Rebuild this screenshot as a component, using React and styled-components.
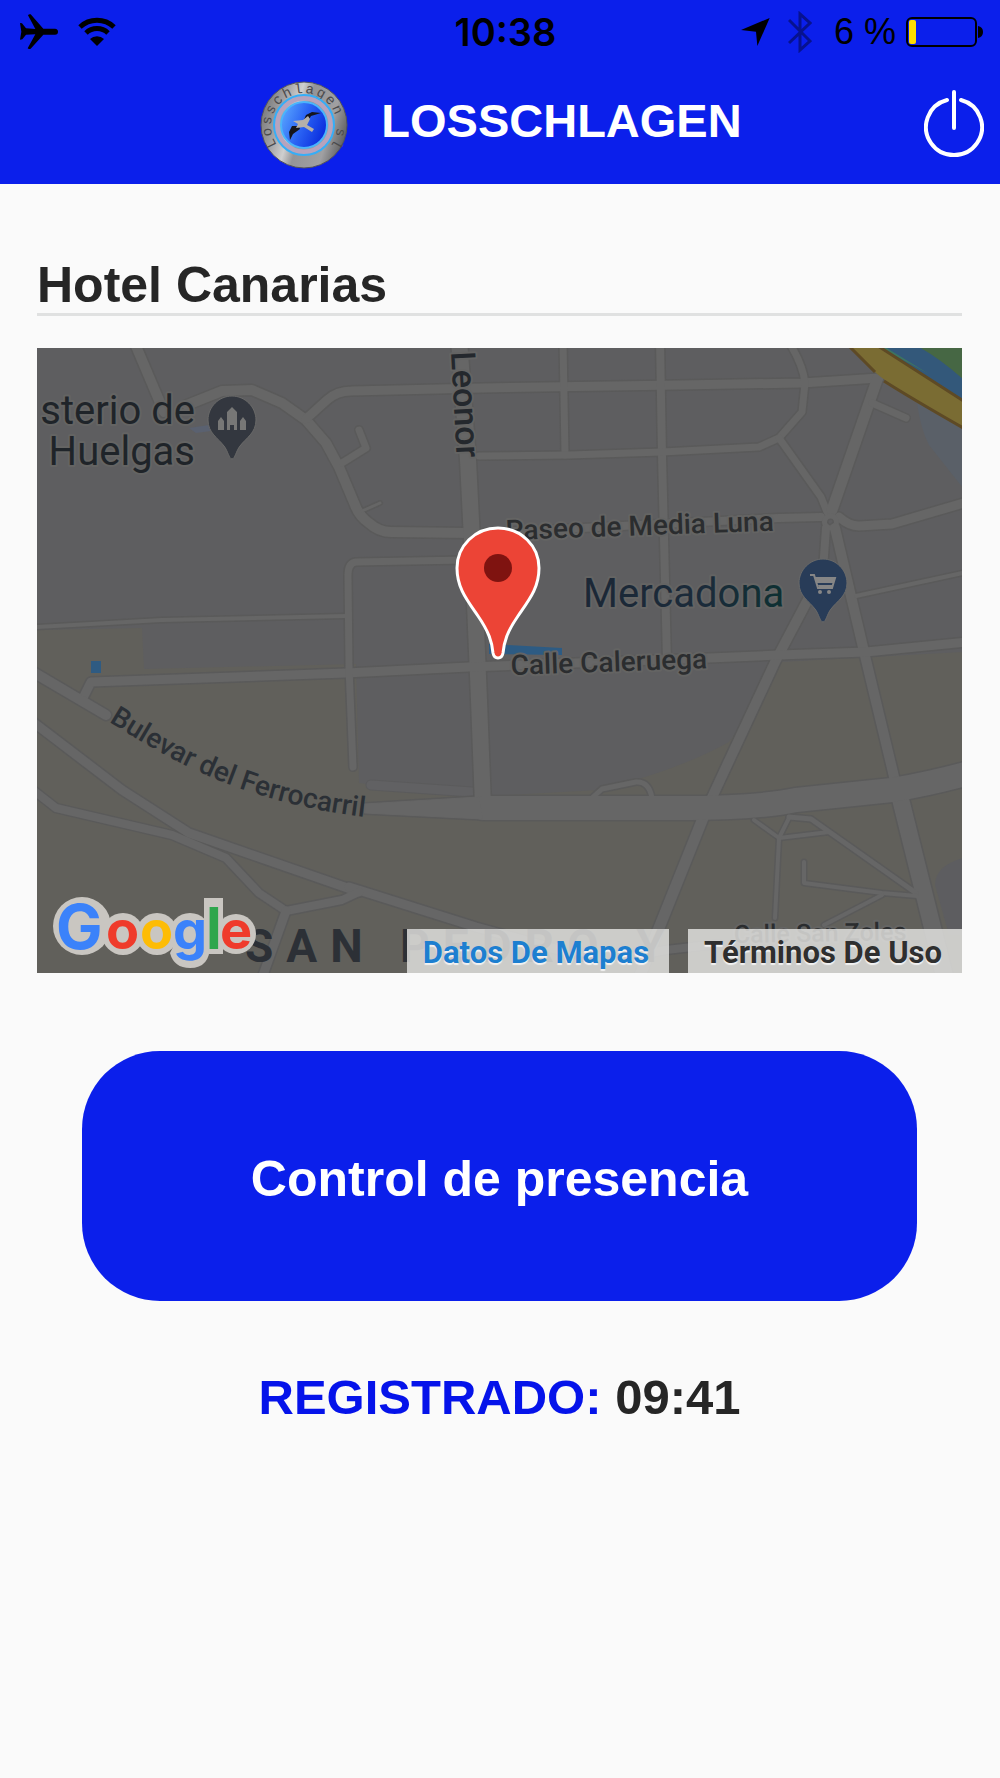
import React from "react";
import styled, { createGlobalStyle } from "styled-components";

const blue = "#0b1feb";
const ink = "#262626";

const GlobalStyle = createGlobalStyle`
  * { box-sizing: border-box; }
  body {
    margin: 0;
    background: #fafafa;
    color: ${ink};
    font-family: "Liberation Sans", Arial, sans-serif;
  }
`;

const Header = styled.header`
  background: ${blue};
`;

const StatusBar = styled.div`
  display: grid;
  grid-template-columns: 1fr auto 1fr;
  align-items: center;
  height: 64px;
  padding: 0 17px 0 20px;
  color: #000;
  font-family: Inter, sans-serif;
  font-size: 36px;
  line-height: 40px;
`;

const StatusGroup = styled.div`
  display: flex;
  align-items: center;
  justify-content: ${(p) => (p.$end ? "flex-end" : "flex-start")};
  gap: ${(p) => p.$gap}px;
`;

const Clock = styled.time`
  padding-left: 8px;
  font-size: 38px;
  font-weight: 600;
`;

const Percent = styled.span`
  font-family: "Liberation Sans", Arial, sans-serif;
  margin: 0 6px 0 18px;
`;

const TitleBar = styled.div`
  display: grid;
  grid-template-columns: 1fr auto 1fr;
  align-items: center;
  height: 120px;
  padding: 0 16px 0 16px;
`;

const Brand = styled.div`
  grid-column: 2;
  display: flex;
  align-items: center;
  gap: 33px;
  padding: 2px 0 0 2px;
`;

const BrandName = styled.h1`
  margin: 0;
  padding-bottom: 8px;
  color: #fff;
  font-size: 47px;
  line-height: 56px;
  font-weight: 700;
`;

const PowerButton = styled.button`
  justify-self: end;
  display: block;
  padding: 0;
  border: 0;
  background: none;
  cursor: pointer;
  svg { display: block; }
`;

const Main = styled.main`
  padding: 73px 38px 64px 37px;
`;

const PlaceName = styled.h2`
  margin: 0 0 32px;
  border-bottom: 3px solid #e0e1e1;
  font-size: 50px;
  line-height: 56px;
  font-weight: 700;
`;

const MapFrame = styled.section`
  position: relative;
  overflow: hidden;
  background: #5e5e60;
`;

const MapDrawing = styled.svg`
  display: block;
  width: 100%;
  height: auto;
  font-family: Roboto, sans-serif;
`;

const MapLinks = styled.nav`
  position: absolute;
  right: 0;
  bottom: 0;
  display: flex;
  gap: 19px;
`;

const MapLink = styled.a`
  padding: 4px 20px 0 16px;
  background: rgba(225, 225, 223, 0.84);
  color: ${(p) => p.$color};
  font-family: Roboto, sans-serif;
  font-size: 31px;
  line-height: 40px;
  font-weight: 700;
  text-decoration: none;
  text-shadow: 0 2px 1px #f2f2f2;
`;

const PresenceButton = styled.button`
  display: block;
  width: calc(100% - 90px);
  height: 250px;
  margin: 78px auto 0;
  padding: 6px 0 0;
  border: 0;
  border-radius: 78px;
  background: ${blue};
  color: #fff;
  font-family: inherit;
  font-size: 50px;
  line-height: 56px;
  font-weight: 700;
  cursor: pointer;
`;

const Registered = styled.p`
  margin: 68px 0 0;
  text-align: center;
  font-size: 49px;
  line-height: 56px;
  font-weight: 700;
  strong { color: #0513ea; }
`;

const roads = [
  [10, "M137 346 L165 412"],
  [10, "M188 405 L223 391 L253 390 L283 403 L307 420 L327 443 L340 467 L356 505 Q360 516 370 523 Q380 532 392 532 L470 533"],
  [9, "M307 419 L328 400 Q338 391 352 391 L483 388 L680 385 L803 383 L880 378"],
  [7, "M343 463 L367 448 L360 430"],
  [3, "M363 511 L381 503"],
  [16, "M460 340 L469 460 L475 580 L480 700 L484 806"],
  [7, "M564 340 L566 455"],
  [8, "M661 340 L663 455 L668 662"],
  [7, "M480 456 L570 455 L663 452 L760 447 L780 438 L803 412 L806 383 Q804 365 791 344"],
  [7, "M780 438 L822 497 L828 512"],
  [11, "M878 380 L833 510"],
  [7, "M873 403 L907 418"],
  [8, "M485 533 L780 518 L822 517"],
  [9, "M840 517 Q850 526 860 526 L893 524 L968 502"],
  [5, "M832 516 a6 6 0 1 1 -1 0"],
  [8, "M827 528 L824 570"],
  [10, "M815 588 L777 660 L709 806"],
  [11, "M704 818 L640 978"],
  [10, "M836 528 L867 660 L897 785"],
  [17, "M898 785 L946 978"],
  [4, "M857 596 L968 572"],
  [9, "M84 698 L92 682 L347 673 L470 667 L710 658 L780 655 L867 652 L968 642"],
  [4, "M36 627 L163 620 L347 616"],
  [7, "M467 560 L357 562 Q349 563 349 575 L350 667 L354 767"],
  [10, "M34 672 L107 715"],
  [9, "M34 722 L123 790 L190 833 L360 892"],
  [9, "M350 887 L477 927 L560 950"],
  [8, "M34 790 L57 808 L173 835 L227 858 L260 893 L287 911 L343 900 L360 892"],
  [9, "M287 911 L263 978"],
  [5, "M593 798 L603 789 L637 782 Q650 781 653 798"],
  [4, "M755 820 L780 838 L830 832"],
  [4, "M790 818 L780 838 L776 918"],
  [5, "M790 817 L812 819 L917 893"],
  [4, "M805 862 L805 883 L883 893 L918 896"],
  [4, "M883 895 L825 925"],
  [8, "M640 955 L667 950 L720 944"],
  [24, "M484 808 L680 808 Q760 808 797 800 L893 790 Q930 784 970 773"],
];

const RoadLayer = ({ extra, color }) => (
  <g fill="none" stroke={color} strokeLinecap="round" strokeLinejoin="round">
    {roads.map(([w, d]) => (
      <path key={d} d={d} strokeWidth={w + extra} />
    ))}
    <path d="M366 804 L480 797 L484 819 L366 813 Z" fill={color} strokeWidth={1 + extra} />
  </g>
);

const halo = { stroke: "#646463", strokeWidth: 4, strokeLinejoin: "round", paintOrder: "stroke" };

const PlacePin = ({ x, y, fill, children }) => (
  <g transform={`translate(${x} ${y})`}>
    <path
      d="M0 -24 C13 -24 24 -13 24 0 C24 13 14 18 8 26 C4 31 3 39 0 39 C-3 39 -4 31 -8 26 C-14 18 -24 13 -24 0 C-24 -13 -13 -24 0 -24 Z"
      fill={fill}
      stroke="#6a6a69"
      strokeWidth="1"
    />
    {children}
  </g>
);

const GoogleLogo = () => (
  <g fontFamily="Inter, sans-serif" fontWeight="700">
    <g fill="#c9c6c1">
      <circle cx="83" cy="926" r="29" />
      <path d="M83 898 H90 L106 909 L98 922 L110 940 L90 954 Z" />
      <circle cx="124" cy="934" r="21" />
      <circle cx="158" cy="934" r="21" />
      <circle cx="191" cy="934" r="21" />
      <path d="M175 945 H211 Q211 968 191 968 Q175 968 171 953 Z" />
      <rect x="205" y="898" width="19" height="56" />
      <circle cx="237" cy="934" r="20" />
    </g>
    <text y="949" fontSize="54">
      <tspan x="57" fontSize="62" fill="#3b82fa">G</tspan>
      <tspan x="107" fill="#ef3b2b">o</tspan>
      <tspan x="141" fill="#fdbc05">o</tspan>
      <tspan x="174" fill="#3b82fa">g</tspan>
      <tspan x="207" fontSize="58" fill="#2ea64c">l</tspan>
      <tspan x="221" fill="#ef3b2b">e</tspan>
    </text>
  </g>
);

const CityMap = () => (
  <MapDrawing viewBox="38 348 925 625" role="img" aria-label="Mapa de Hotel Canarias">
    <defs>
      <path id="bulevar" d="M110 722 C160 752 232 802 374 818" />
      <linearGradient id="shop">
        <stop offset="0" stopColor="#1b2736" />
        <stop offset="0.6" stopColor="#1b2b3a" />
        <stop offset="1" stopColor="#0d3032" />
      </linearGradient>
    </defs>
    <rect x="38" y="348" width="925" height="625" fill="#5e5e60" />
    <path
      d="M37 630 L143 628 L145 669 L357 664 L360 783 L475 797 L600 790 Q680 770 730 742 Q755 710 765 685 L782 662 L964 652 L964 974 L37 974 Z"
      fill="#61605b"
    />
    <path d="M964 858 Q936 866 936 885 L950 935 L964 935 Z" fill="#5d5d60" />
    <path d="M918 403 Q922 430 930 445 L964 488 L964 425 Z" fill="#5a6068" />
    <path d="M190 428 L210 425 L212 431 L197 433 Z" fill="#5a6170" />
    <path d="M372 785 L473 792" stroke="#5b5b5c" strokeWidth="11" strokeLinecap="round" />
    <path d="M372 785 L473 792" stroke="#616163" strokeWidth="9" strokeLinecap="round" />
    <RoadLayer extra={3} color="#5a5a5a" />
    <RoadLayer extra={0} color="#666666" />

    <path d="M880 347 L964 347 L964 402 Z" fill="#33587a" />
    <path d="M920 347 L964 347 L964 379 Q940 358 920 347 Z" fill="#466744" />
    <path d="M880 347 L886 347 L930 374 Z" fill="#3d7560" />
    <path d="M850 346 L877 373 Q895 389 964 428 L964 401 L880 346 Z" fill="#7a6c33" />
    <path d="M850 346 L876 372 M885 381 Q910 397 966 429 M879 346 L966 402" fill="none" stroke="#5e4a25" strokeWidth="3" />

    <rect x="92" y="661" width="10" height="12" fill="#2f5b82" />
    <path d="M490 644 L563 648 L563 655 L490 654 Z" fill="#2d5b83" />

    <g fill="#1f2429" fontSize="40" textAnchor="end">
      <text x="196" y="424" {...halo}>sterio de</text>
      <text x="196" y="465" {...halo}>Huelgas</text>
    </g>
    <PlacePin x={233} y={420} fill="#33373f">
      <g fill="#777776">
        <path d="M-14 10 V1 L-11 -3 L-8 1 V10 Z" />
        <path d="M8 10 V1 L11 -3 L14 1 V10 Z" />
        <path d="M-5 10 V-8 L0 -13 L5 -8 V10 H2 V5 H-2 V10 Z" />
      </g>
    </PlacePin>

    <g fill="#24282d" fontWeight="500">
      <text fontSize="34" transform="translate(452 352) rotate(87)" {...halo}>Leonor</text>
      <g fontSize="28" fill="#2b2d2f">
        <text transform="translate(507 540) rotate(-2)" {...halo}>Paseo de Media Luna</text>
        <text transform="translate(512 675) rotate(-2)" {...halo}>Calle Caleruega</text>
        <text fontSize="25" transform="translate(735 943) rotate(-1)" {...halo}>Calle San Zoles</text>
      </g>
      <text fontSize="28" fill="#2b3036">
        <textPath href="#bulevar">Bulevar del Ferrocarril</textPath>
      </text>
    </g>
    <text x="584" y="607" fontSize="40" fill="url(#shop)" {...halo}>Mercadona</text>
    <PlacePin x={824} y={583} fill="#283c58">
      <path d="M-13 -8 H-9 L-5 5 H9 L12 -5 H-8" fill="none" stroke="#868686" strokeWidth="2" />
      <path d="M-8 -5 H12 L10 0 H-6 Z M-5 2 H9 V5 H-4 Z" fill="#868686" />
      <circle cx="-3" cy="9" r="2" fill="#868686" />
      <circle cx="6" cy="9" r="2" fill="#868686" />
    </PlacePin>

    <text x="246" y="962" fontSize="46" fontWeight="700" letterSpacing="13" fill="#2c3036">SAN PEDRO Y</text>

    <path
      d="M499 528 C522 528 540 546 540 568 C540 588 530 600 519 616 C508 632 505 642 504 653 Q503 658 499 658 Q495 658 494 653 C493 642 490 632 479 616 C468 600 458 588 458 568 C458 546 476 528 499 528 Z"
      fill="#ec4436"
      stroke="#fff"
      strokeWidth="3"
    />
    <circle cx="499" cy="568" r="14" fill="#7f1310" />

    <GoogleLogo />
  </MapDrawing>
);

const Plane = () => (
  <svg width="38" height="36" viewBox="60 41 114 108" aria-hidden="true">
    <path d="M60 68 L66 69 L78 84 L106 86 L84 45 Q86 41 92 42 L130 85 H165 Q174 86 174 94 Q174 103 165 103 H130 L92 145 Q86 148 83 144 L106 102 L78 103 L67 117 L60 118 L64 94 Z" />
  </svg>
);

const Wifi = () => (
  <svg width="38" height="30" viewBox="0 0 38 30" aria-hidden="true">
    <g fill="none" stroke="#000" strokeWidth="5">
      <path d="M2 10 A25 25 0 0 1 36 10" />
      <path d="M8 16 A16 16 0 0 1 30 16" />
    </g>
    <path d="M19 29 L12 22 A10 10 0 0 1 26 22 Z" />
  </svg>
);

const Location = () => (
  <svg width="29" height="28" viewBox="722 56 87 84" aria-hidden="true">
    <path d="M722 92 L808 56 L771 140 L767 97 Z" />
  </svg>
);

const Bluetooth = () => (
  <svg width="24" height="42" viewBox="0 0 24 42" aria-hidden="true">
    <path d="M1 9 L22 30 L12 39 V3 L22 12 L1 32" fill="none" stroke="#07128f" strokeWidth="3" />
  </svg>
);

const Battery = () => (
  <svg width="77" height="30" viewBox="0 0 77 30" aria-hidden="true">
    <rect x="1" y="1" width="69" height="28" rx="5" fill="none" stroke="#000" strokeWidth="2" />
    <rect x="3" y="3" width="7" height="24" rx="2" fill="#ffdd00" />
    <path d="M72 9 Q77 10 77 15 Q77 20 72 21 Z" />
  </svg>
);

const Badge = () => (
  <svg width="88" height="88" viewBox="-44 -44 88 88" role="img" aria-label="Losschlagen SL">
    <defs>
      <linearGradient id="steel" x1="0" y1="0.3" x2="1" y2="0.6">
        <stop offset="0" stopColor="#777779" />
        <stop offset="0.22" stopColor="#a3a3a5" />
        <stop offset="0.38" stopColor="#cfcfcf" />
        <stop offset="0.5" stopColor="#949497" />
        <stop offset="0.8" stopColor="#a0a0a2" />
        <stop offset="1" stopColor="#5f5f60" />
      </linearGradient>
      <linearGradient id="sky" x1="0" y1="0.2" x2="1" y2="0.6">
        <stop offset="0" stopColor="#5aa6ff" />
        <stop offset="0.5" stopColor="#2a63f4" />
        <stop offset="1" stopColor="#0a2bdd" />
      </linearGradient>
      <path id="rim" d="M-27 20 A33 33 0 1 1 27 20" />
    </defs>
    <circle r="43" fill="url(#steel)" stroke="#55555a" />
    <text fontFamily="Liberation Mono, monospace" fontSize="14" letterSpacing="2" fill="#4b4b4d">
      <textPath href="#rim">Losschlagen sl</textPath>
    </text>
    <circle r="27" fill="none" stroke="#b7a3bd" strokeWidth="5" />
    <circle r="30" fill="none" stroke="#35aef8" strokeWidth="2" />
    <circle r="23" fill="url(#sky)" stroke="#4ab4fb" strokeWidth="2" />
    <path d="M17 -12 L8 -13 L2 -10 L-1 -3 L3 -2 L7 -9 Z M-5 1 L-12 1 L-15 7 L-14 15 L-11 9 L-4 4 Z" fill="#15151c" />
    <path d="M4 -9 L-1 -5 L-11 -4 L-6 -1 L-8 3 L0 2 L8 7 L10 4 L3 0 L6 -6 Z" fill="#b5b0aa" />
  </svg>
);

const Power = () => (
  <svg width="60" height="68" viewBox="0 0 60 68" aria-hidden="true">
    <g fill="none" stroke="#fff" strokeWidth="4" strokeLinecap="round">
      <path d="M23 10 A28 28 0 1 0 37 10" />
      <path d="M30 2 V38" />
    </g>
  </svg>
);

export default function App() {
  return (
    <>
      <GlobalStyle />
      <Header>
        <StatusBar>
          <StatusGroup $gap={20}>
            <Plane />
            <Wifi />
          </StatusGroup>
          <Clock>10:38</Clock>
          <StatusGroup $end $gap={4}>
            <StatusGroup $gap={18}>
              <Location />
              <Bluetooth />
            </StatusGroup>
            <Percent>6 %</Percent>
            <Battery />
          </StatusGroup>
        </StatusBar>
        <TitleBar>
          <Brand>
            <Badge />
            <BrandName>LOSSCHLAGEN</BrandName>
          </Brand>
          <PowerButton type="button" aria-label="Salir">
            <Power />
          </PowerButton>
        </TitleBar>
      </Header>
      <Main>
        <PlaceName>Hotel Canarias</PlaceName>
        <MapFrame>
          <CityMap />
          <MapLinks>
            <MapLink href="#datos" $color="#1d7fd0">Datos De Mapas</MapLink>
            <MapLink href="#terminos" $color="#2f2f2f">Términos De Uso</MapLink>
          </MapLinks>
        </MapFrame>
        <PresenceButton type="button">Control de presencia</PresenceButton>
        <Registered>
          <strong>REGISTRADO:</strong> <time>09:41</time>
        </Registered>
      </Main>
    </>
  );
}
